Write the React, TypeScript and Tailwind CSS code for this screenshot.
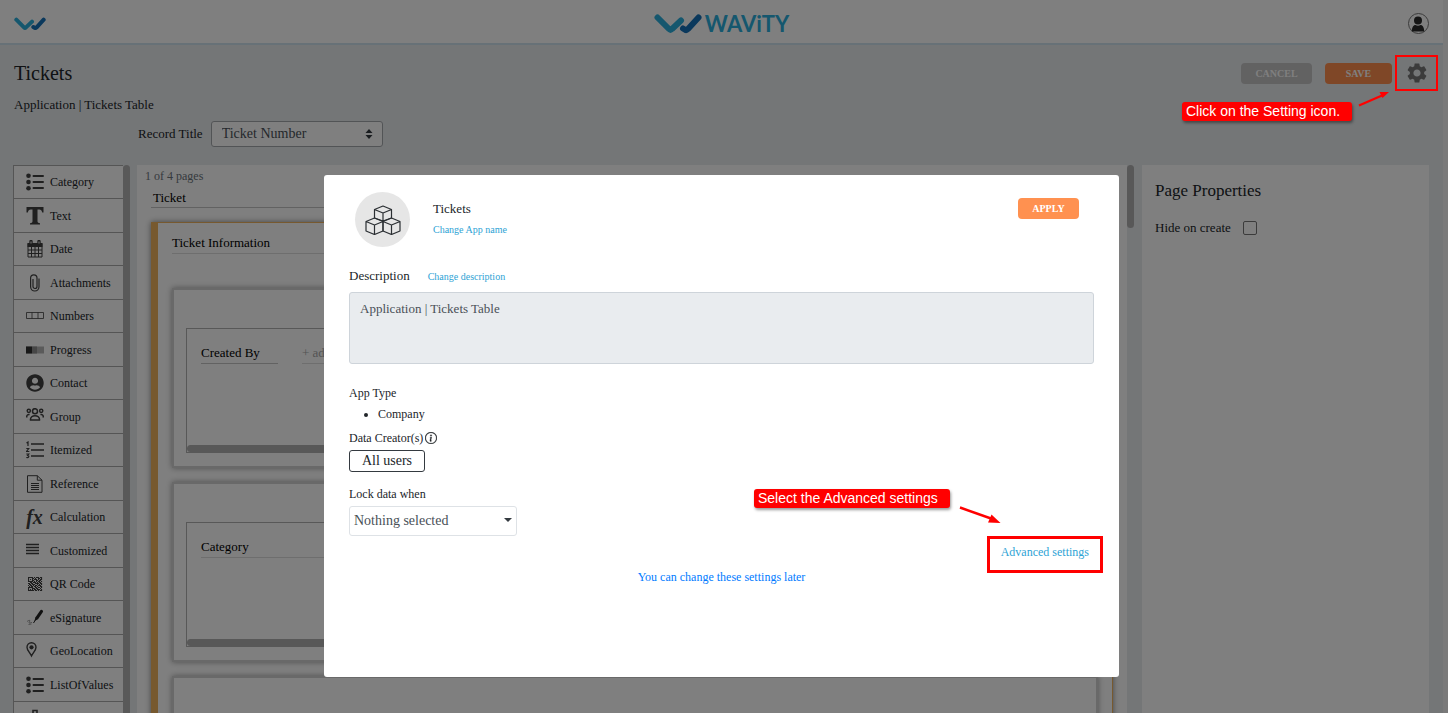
import type { ReactNode } from "react";
import { FaUserCircle } from "react-icons/fa";
import { MdSettings } from "react-icons/md";
import { BsInfoCircle } from "react-icons/bs";

function LogoMark({ className }: { className: string }) {
  return (
    <svg viewBox="0 0 48 20" className={className} fill="none" strokeWidth="6" strokeLinejoin="round" strokeLinecap="round" aria-hidden="true">
      <path d="M3.500 3.500L15 15Q16.500 16.500 18 15L27 6.500" stroke="#2aaedc" />
      <path d="M29 14.500L31.500 16Q32.500 16.500 34 15L44.500 3.500" stroke="#1470b8" />
    </svg>
  );
}

function Glyph({ children, box = "0 0 18 18" }: { children: ReactNode; box?: string }) {
  return (
    <svg viewBox={box} className="size-[18px]" fill="none" stroke="currentColor" aria-hidden="true">
      {children}
    </svg>
  );
}

const bullets = (
  <Glyph>
    <g fill="currentColor" stroke="none">
      <circle cx="2.500" cy="2.800" r="2.300" />
      <circle cx="2.500" cy="9" r="2.300" />
      <circle cx="2.500" cy="15.200" r="2.300" />
    </g>
    <path d="M7.500 3h9.500M7.500 9h9.500M7.500 15h9.500" strokeWidth="2" strokeLinecap="round" />
  </Glyph>
);

const textIcon = (
  <Glyph>
    <path
      fill="currentColor"
      stroke="none"
      d="M.5 0h17v5.500h-1.300c-.4-2-1.200-3-3-3h-1.700V14c0 1.500.5 2 2.500 2.200V17.500H4v-1.300c2-.2 2.500-.7 2.500-2.200V2.500H4.800c-1.800 0-2.600 1-3 3H.5z"
    />
  </Glyph>
);

const calendar = (
  <Glyph>
    <path fill="currentColor" stroke="none" d="M1.500 3h15v4h-15z" />
    <path d="M2 3.500h14v13.500H2zM2 10h14M2 13.500h14M5.500 6v11M9 6v11M12.500 6v11" />
    <path d="M5 1.500v2M13 1.500v2" strokeWidth="3.400" strokeLinecap="round" />
    <path d="M5 1.500v2M13 1.500v2" stroke="#fff" />
  </Glyph>
);

const clip = (
  <Glyph>
    <path
      d="M11 5v7.500a2 2 0 0 1-4 0V5M13 4.500v8.300a4.200 4.200 0 0 1-8.400 0V4a3.200 3.200 0 0 1 6.400 0v2M7 6V5"
      strokeWidth="1.200"
    />
  </Glyph>
);

const numbers = (
  <Glyph>
    <path d="M.5 5.500h17v6h-17zM6 5.500v6M12 5.500v6" strokeWidth="1" opacity=".8" />
  </Glyph>
);

const progress = (
  <Glyph>
    <path d="M0 5.500h18v7H0z" fill="#b4b4b4" stroke="none" />
    <path d="M0 5.500h6v7H0z" fill="#303030" stroke="none" />
    <path d="M6 5.500h5v7H6z" fill="#8c8c8c" stroke="none" />
  </Glyph>
);

const group = (
  <Glyph>
    <g strokeWidth="1.500">
      <circle cx="9" cy="3.200" r="2.500" />
      <circle cx="2.800" cy="2.800" r="1.600" />
      <circle cx="15.200" cy="2.800" r="1.600" />
      <path d="M4.500 12c-.6-5.800 9.600-5.800 9 0zM.8 9.500c-.3-2 .6-3.300 2.800-3.100M17.200 9.500c.3-2-.6-3.300-2.800-3.100" />
    </g>
  </Glyph>
);

const itemized = (
  <Glyph>
    <path d="M5 3h13M5 9h13M5 15h13" strokeWidth="1.700" />
    <path d="M.5 2l1.500-1v4M.3 7.500h2.400L.5 10.500h2.800M.3 13h2.500l-1.200 1.500c2 .2 1.500 2.500-1.300 2" strokeWidth="1.200" />
  </Glyph>
);

const reference = (
  <Glyph>
    <path d="M1.500.7h9.800L16 5.200v12.100H1.500zM11.300.7v4.500H16M5 8.500h8M5 10.500h8M5 12.500h8M5 14.500h8" />
  </Glyph>
);

const calculation = <span className="text-xl leading-5 font-bold italic">fx</span>;

const customized = (
  <Glyph>
    <path d="M0 2.500h13M0 5.500h13M0 8.500h13M0 11.500h13" strokeWidth="1.400" />
  </Glyph>
);

const qrRows = [
  "11111010111011",
  "10001101001101",
  "10101011101011",
  "10001100110110",
  "11111010101101",
  "00110111010110",
  "11011001111011",
  "01101110010101",
  "10110101101110",
  "01011011010011",
  "11111001101101",
  "10001110110010",
  "10101011011101",
  "11111101101011",
];

const qrCode = (
  <Glyph>
    <path
      fill="currentColor"
      stroke="none"
      d={qrRows
        .map((row, y) => [...row].map((cell, x) => (cell === "1" ? `M${x + 2} ${y + 2}h1.100v1.100h-1.100z` : "")).join(""))
        .join("")}
    />
  </Glyph>
);

const signature = (
  <Glyph>
    <path d="M8.500 12l.8-3.600 4.900-7c1-1.400 3.600.1 2.700 1.700L12 10.300 8.500 12z" fill="#222" stroke="none" />
    <path d="M7.500 14l2.500-4" stroke="#222" />
    <path d="M1 12.500c2-1.500 4-1.500 2.500.2s.5 1.500 2.500.6M2.500 15.500l3-.5" strokeWidth=".7" opacity=".7" />
  </Glyph>
);

const pin = (
  <Glyph>
    <path d="M5.500 14C3 9.500 1 8 1 5.200a4.500 4.500 0 0 1 9 0C10 8 8 9.500 5.500 14z" strokeWidth="1.400" />
    <circle cx="5.500" cy="5.300" r="2.100" fill="currentColor" stroke="none" />
  </Glyph>
);

const org = (
  <Glyph>
    <path d="M7 1.500h4v4H7zM9 5.500V9M3 13V9h12v4" strokeWidth="1.600" />
  </Glyph>
);

const fieldTypes: { label: string; icon: ReactNode }[] = [
  { label: "Category", icon: bullets },
  { label: "Text", icon: textIcon },
  { label: "Date", icon: calendar },
  { label: "Attachments", icon: clip },
  { label: "Numbers", icon: numbers },
  { label: "Progress", icon: progress },
  { label: "Contact", icon: <FaUserCircle className="size-[18px]" /> },
  { label: "Group", icon: group },
  { label: "Itemized", icon: itemized },
  { label: "Reference", icon: reference },
  { label: "Calculation", icon: calculation },
  { label: "Customized", icon: customized },
  { label: "QR Code", icon: qrCode },
  { label: "eSignature", icon: signature },
  { label: "GeoLocation", icon: pin },
  { label: "ListOfValues", icon: bullets },
  { label: "", icon: org },
];

function FieldCard({ title, add }: { title?: string; add?: boolean }) {
  return (
    <div className="h-[180px] shrink-0 border-2 border-[#d2d2d2] px-3 pt-[38px] shadow-[0_0_6px_#999]">
      {title && (
        <div className="flex h-[125px] flex-col justify-between border border-[#b0b0b0]">
          <div className="flex gap-6 pt-4 pl-3.5 text-[13px] leading-4 text-black">
            <span className={add ? "w-[77px] border-b border-[#c4c4c4] pb-0.5" : "grow border-b border-[#dcdcdc] pb-0.5"}>
              {title}
            </span>
            {add && <span className="grow border-b border-[#dcdcdc] text-[#a8a8a8]">+ add field</span>}
          </div>
          <div className="h-[7px] rounded-l bg-[#b0b0b0]" />
        </div>
      )}
    </div>
  );
}

function Page() {
  return (
    <div className="flex h-full flex-col overflow-hidden bg-[#e9ecef]">
      <header className="flex h-[45px] shrink-0 items-center justify-between border-b-2 border-[#cfe2ee] bg-white pt-1 pr-3.5 pl-3.5">
        <LogoMark className="h-3.5 w-8" />
        <div className="flex items-center gap-[3px]">
          <LogoMark className="h-5 w-12" />
          <span className="font-['Lato',sans-serif] text-[22px] leading-8 font-bold text-[#2aaedc]">WAViTY</span>
        </div>
        <div className="flex w-8 justify-end">
          <button aria-label="Account" className="flex size-[21px] items-center justify-center rounded-full border border-[#777]">
            <svg viewBox="0 0 14 16" className="h-4 w-3.5" fill="#2b2b2b" aria-hidden="true">
              <circle cx="7" cy="4.500" r="4" />
              <path d="M.8 15.500c0-4 1.500-6.500 3.700-6.500 1.500 1 3.500 1 5 0 2.200 0 3.700 2.500 3.700 6.500z" />
            </svg>
          </button>
        </div>
      </header>

      <div className="flex h-[120px] shrink-0 justify-between pt-4 pr-3.5 pl-3.5">
        <div>
          <h1 className="text-xl leading-6">Tickets</h1>
          <p className="mt-3 text-[13px] leading-4">Application | Tickets Table</p>
          <div className="mt-2 flex items-center gap-2 pl-[124px]">
            <label htmlFor="record-title" className="text-[13px]">Record Title</label>
            <div className="relative">
              <select
                id="record-title"
                className="h-[26px] w-[172px] appearance-none rounded-[3px] border border-[#a5a9ad] bg-white px-2.5 text-sm leading-5 text-[#495057]"
              >
                <option>Ticket Number</option>
              </select>
              <svg viewBox="0 0 8 10" className="pointer-events-none absolute top-2 right-2.5 h-2.5 w-2" fill="#343a40" aria-hidden="true">
                <path d="M4 0l3.500 4h-7zM4 10L.5 6h7z" />
              </svg>
            </div>
          </div>
        </div>
        <div className="flex h-6 items-center gap-[13px]">
          <button className="h-[21px] w-[71px] rounded bg-[#c4c4c4] text-[10px] font-bold text-white">CANCEL</button>
          <button className="h-[21px] w-[67px] rounded bg-[#ff8f4f] text-[10px] font-bold text-white">SAVE</button>
          <button aria-label="Settings" className="text-[#777]">
            <MdSettings className="size-6" />
          </button>
        </div>
      </div>

      <div className="flex min-h-0 grow pr-3.5 pl-[13px]">
        <aside className="flex w-[117px] shrink-0 overflow-hidden">
          <ul className="grow border-t border-l border-[#aaa] bg-white">
            {fieldTypes.map((f, i) => (
              <li key={i} className="odd:h-[33px] even:h-[34px]">
                <button className="flex size-full items-center gap-1.5 border-b border-[#aaa] pl-[11px] text-left text-xs text-[#212529]">
                  <span className="flex w-[19px] justify-center text-[#404040]">{f.icon}</span>
                  {f.label}
                </button>
              </li>
            ))}
          </ul>
          <div className="w-[7px] rounded-t bg-[#b2b2b2]" />
        </aside>
        <main className="ml-[7px] flex min-w-0 grow flex-col overflow-hidden bg-white pr-3.5 pl-3.5">
          <p className="-ml-1.5 pt-[3px] text-xs leading-4 text-[#6c757d]">1 of 4 pages</p>
          <h2 className="mt-1 border-b border-[#c4c4c4] pl-0.5 text-[13px] leading-[19px] text-black">Ticket</h2>
          <section className="mt-3.5 flex grow flex-col gap-3.5 border-t border-r border-l-[7px] border-[#efb25f] pr-3.5 pl-3.5 shadow-[0_0_6px_#888]">
            <h3 className="mt-[11px] mb-5 border-b border-[#dcdcdc] pb-0.5 text-[13px] leading-[17px] text-black">Ticket Information</h3>
            <FieldCard title="Created By" add />
            <FieldCard title="Category" />
            <FieldCard />
          </section>
        </main>
        <div className="w-[7px] shrink-0">
          <div className="h-[63px] rounded bg-[#b0b0b0]" />
        </div>
        <aside className="ml-2 w-[287px] shrink-0 bg-white px-[13px] pt-4">
          <h2 className="text-[17px] leading-5">Page Properties</h2>
          <div className="mt-[17px] flex items-center gap-3 text-[13px] leading-5">
            <label htmlFor="hide-on-create">Hide on create</label>
            <input id="hide-on-create" type="checkbox" className="size-3.5 appearance-none rounded-xs border border-[#777] bg-white" />
          </div>
        </aside>
      </div>
    </div>
  );
}

function Cubes() {
  return (
    <svg viewBox="0 0 36 30" className="h-[30px] w-9" fill="none" stroke="#2b2f33" strokeWidth="1.200" strokeLinejoin="round" aria-hidden="true">
      <path d="M18 1l8.500 3.500v8.500L18 16l-8.500-3V4.500zM9.500 4.500L18 8l8.500-3.500M18 8v8" />
      <path d="M9.500 13L18 16.500V26l-8.500 3.500L1 26v-9.500zM1 16.500L9.500 20l8.500-3.500M9.500 20v9.500" />
      <path d="M26.500 13l8.500 3.500V26l-8.500 3.500L18 26v-9.500zM18 16.500l8.500 3.500 8.500-3.500M26.500 20v9.500" />
    </svg>
  );
}

function Arrow({ up, className }: { up?: boolean; className: string }) {
  return (
    <svg viewBox={up ? "0 0 32 16" : "0 0 42 18"} className={className} fill="red" stroke="red" aria-hidden="true">
      {up ? (
        <>
          <path d="M1 14.500L24 4.500" strokeWidth="2.200" />
          <path d="M31 1l-6.500 6-3-6z" stroke="none" />
        </>
      ) : (
        <>
          <path d="M1 1.500L32 12.500" strokeWidth="2.400" />
          <path d="M41.500 17l-12.500-.5 3.500-8z" stroke="none" />
        </>
      )}
    </svg>
  );
}

function SettingsDialog() {
  return (
    <div
      role="dialog"
      aria-label="App settings"
      className="relative mx-auto mt-[175px] w-[795px] max-w-full rounded-[3px] bg-white px-[25px] pt-[17px] pb-[92px]"
    >
      <div className="flex items-start">
        <div className="ml-1.5 flex size-[55px] items-center justify-center rounded-full bg-[#e6e6e6]">
          <Cubes />
        </div>
        <div className="ml-[23px] grow pt-[7px]">
          <h2 className="text-[13px] leading-5">Tickets</h2>
          <a href="#name" className="block text-[10px] leading-[22px] text-[#2ea3d5]">Change App name</a>
        </div>
        <button className="mt-1.5 mr-[15px] h-[21px] w-[61px] rounded bg-[#ff9150] text-[10px] font-bold text-white">APPLY</button>
      </div>

      <div className="mt-[19px] flex items-baseline gap-[18px]">
        <label htmlFor="description" className="text-[13px] leading-5">Description</label>
        <a href="#description" className="text-[10px] text-[#2ea3d5]">Change description</a>
      </div>
      <textarea
        id="description"
        readOnly
        defaultValue="Application | Tickets Table"
        className="mt-1.5 block h-[72px] w-full resize-none rounded-[3px] border border-[#ced4da] bg-[#e9ecef] px-2.5 py-1.5 text-[13px] leading-5 text-[#495057]"
      />

      <h3 className="mt-[19px] text-xs leading-5">App Type</h3>
      <ul className="ml-[29px] list-disc text-xs leading-[22px]">
        <li>Company</li>
      </ul>
      <div className="mt-[3px] flex items-center gap-0.5 text-xs leading-5">
        Data Creator(s) <BsInfoCircle className="size-3" strokeWidth="0.4" />
      </div>
      <button className="mt-0.5 block h-[22px] w-[76px] rounded-[3px] border border-[#343a40] text-sm leading-5">All users</button>
      <label htmlFor="lock" className="mt-3 block text-xs leading-5">Lock data when</label>
      <div className="relative mt-0.5 w-[168px]">
        <select id="lock" className="h-[30px] w-full appearance-none rounded-[3px] border border-[#dee2e6] bg-white px-1 text-sm text-[#495057]">
          <option>Nothing selected</option>
        </select>
        <svg viewBox="0 0 8 4" className="pointer-events-none absolute top-3 right-[5px] h-1 w-2" fill="#343a40" aria-hidden="true">
          <path d="M0 0h8L4 4z" />
        </svg>
      </div>

      <div className="-mr-[9px] flex justify-end">
        <div className="relative border-3 border-[#ff0000]">
          <a href="#advanced" className="block px-[11px] pt-1 pb-2 text-xs leading-[19px] text-[#2ea3d5]">Advanced settings</a>
          <div className="absolute right-[150px] bottom-[62px] w-[196px] rounded-[3px] bg-[#ff0000] px-1 font-['Liberation_Sans',sans-serif] text-sm leading-[19px] whitespace-nowrap text-white shadow-[1px_2px_3px_#0006]">
            Select the Advanced settings
          </div>
          <Arrow className="absolute right-[99px] bottom-[46px] h-[18px] w-[42px]" />
        </div>
      </div>
      <p className="-mt-1 text-center text-xs leading-4 text-[#007bff]">You can change these settings later</p>
    </div>
  );
}

export default function App() {
  return (
    <div className="relative h-screen overflow-hidden bg-[#f5f5f5] pr-[5px] font-['Liberation_Serif',serif] text-[#212529]">
      <Page />
      <div className="absolute inset-0 bg-black/50 pr-[5px]">
        <SettingsDialog />
      </div>
      <div className="absolute top-[55px] right-2.5 h-9 w-[43px] border-2 border-[#ff0000]" />
      <Arrow up className="absolute top-[91px] right-[58px] h-4 w-8" />
      <div className="absolute top-[102px] right-24 w-[170px] rounded-[3px] bg-[#ff0000] px-1 font-['Liberation_Sans',sans-serif] text-sm leading-[19px] whitespace-nowrap text-white shadow-[1px_2px_3px_#0006]">
        Click on the Setting icon.
      </div>
    </div>
  );
}
